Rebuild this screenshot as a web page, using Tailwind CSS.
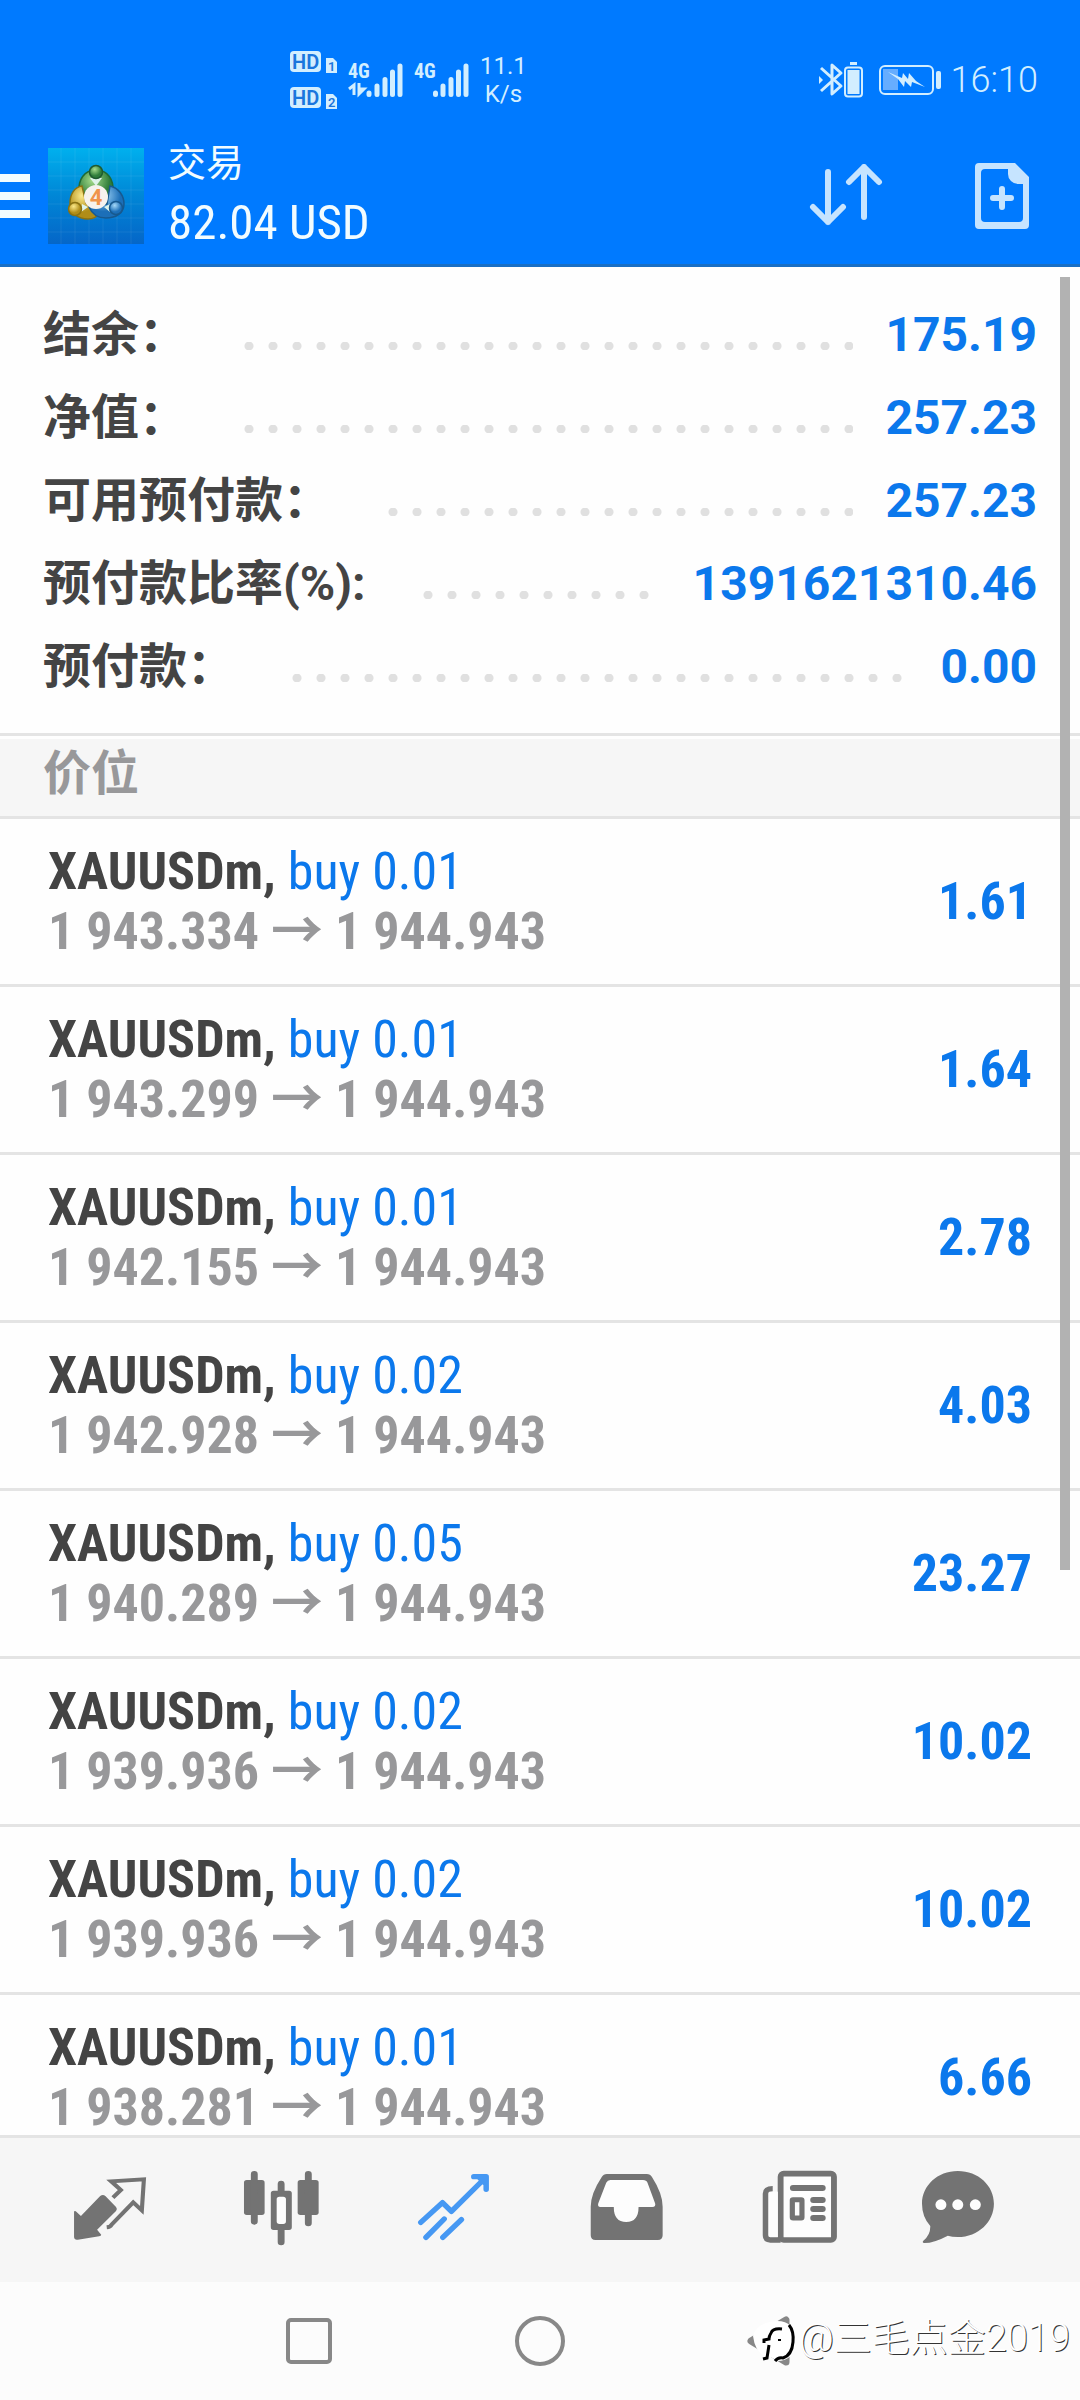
<!DOCTYPE html>
<html lang="zh-CN">
<head>
<meta charset="utf-8">
<meta name="viewport" content="width=device-width, initial-scale=1">
<title>交易</title>
<script src="https://cdn.jsdelivr.net/npm/@tailwindcss/browser@4"></script>
</head>
<body class="relative flex h-screen flex-col overflow-hidden bg-[#fefefe] font-['Roboto','Noto_Sans_CJK_SC',sans-serif] text-[#444]">

<header class="shrink-0 border-b-3 border-[#1a6fc4] bg-[#007aff] text-[#f2fcff]">
  <!-- system status -->
  <div class="flex h-32 items-center pt-8 pr-[42px] pl-[290px] text-[#d2eeff]">
    <svg class="h-[58px] w-12" viewBox="0 0 48 58" fill="currentColor">
      <rect x="0" y="0" width="31" height="21" rx="4"/><rect x="0" y="36" width="31" height="21" rx="4"/>
      <path d="M36 7h7l4 4v11H36zM36 43h7l4 4v11H36z"/>
      <g fill="#1b76dd" font-family="Roboto" font-weight="600"><text x="2" y="18" font-size="20">HD</text><text x="2" y="54" font-size="20">HD</text>
      <text x="38" y="20" font-size="13">1</text><text x="38" y="56" font-size="13">2</text></g>
    </svg>
    <svg class="ml-2.5 h-[38px] w-14 overflow-visible" viewBox="0 0 56 38" fill="currentColor">
      <text x="0" y="17" font-size="20" font-weight="700" font-family="Roboto Condensed">4G</text>
      <path d="M1 28l5-4v10M11 22v11l5-5h-5" stroke="currentColor" stroke-width="3" fill="none"/>
      <path d="M21 32v1.500M29 25v8.500M37 18.500v15M44.500 11v22.500M52 5v28.500" stroke="currentColor" stroke-width="5" stroke-linecap="round"/>
    </svg>
    <svg class="ml-2.5 h-[38px] w-14 overflow-visible" viewBox="0 0 56 38" fill="currentColor">
      <text x="0" y="17" font-size="20" font-weight="700" font-family="Roboto Condensed">4G</text>
      <path d="M21.500 32v1.500M29 25v8.500M37 18.500v15M44.500 11v22.500M52 5v28.500" stroke="currentColor" stroke-width="5" stroke-linecap="round"/>
    </svg>
    <p class="ml-2.5 text-center text-2xl leading-7">11.1<br>K/s</p>
    <svg class="ml-auto h-9 w-12" viewBox="0 0 48 36" fill="none" stroke="currentColor">
      <path d="M2 6l20 18-9 8V3l9 8L2 29" stroke-width="3" stroke-linejoin="round"/>
      <path d="M0 14l4 4-4 4z" fill="currentColor" stroke="none"/>
      <path d="M31 1.500h7" stroke-width="3"/><rect x="26" y="5.500" width="17" height="29" rx="3" stroke-width="2"/><rect x="28.500" y="8" width="12" height="24" fill="currentColor" stroke="none"/>
    </svg>
    <svg class="ml-3 h-[30px] w-[62px]" viewBox="0 0 62 30" fill="none" stroke="currentColor">
      <rect x="1" y="1" width="53" height="28" rx="5" stroke-width="2"/><rect x="4" y="4" width="15" height="21" fill="#66adff" stroke="none"/>
      <path d="M9 7l14 6 1-5 5 6 1-6 7 8 9 6-13-5-1 5-6-6-1 6-6-8z" fill="currentColor" stroke="none"/>
      <rect x="57" y="6" width="5" height="18" rx="2" fill="currentColor" stroke="none"/>
    </svg>
    <p class="ml-2.5 text-4xl font-light">16:10</p>
  </div>
  <!-- app bar -->
  <div class="flex h-[136px] items-center pr-[50px]">
    <button aria-label="菜单" class="flex w-[30px] flex-col gap-2.5">
      <span class="h-2 bg-current"></span><span class="h-2 bg-current"></span><span class="h-2 bg-current"></span>
    </button>
    <svg class="ml-[18px] size-24" viewBox="0 0 96 96">
      <defs>
        <linearGradient id="bg" x2="0" y2="1"><stop stop-color="#00b0ee"/><stop offset=".5" stop-color="#0086d6"/><stop offset="1" stop-color="#0566c8"/></linearGradient>
        <radialGradient id="gr" cx=".4" cy=".3"><stop stop-color="#a6dc8c"/><stop offset="1" stop-color="#2f7d3a"/></radialGradient>
        <radialGradient id="ye" cx=".4" cy=".3"><stop stop-color="#fbe98a"/><stop offset="1" stop-color="#b08d18"/></radialGradient>
        <radialGradient id="bl" cx=".4" cy=".3"><stop stop-color="#a5d8f8"/><stop offset="1" stop-color="#1c6fb8"/></radialGradient>
      </defs>
      <rect width="96" height="96" fill="url(#bg)"/>
      <path d="M0 14h96M0 28h96M0 42h96M0 56h96M0 70h96M0 84h96M13 0v96M27 0v96M41 0v96M55 0v96M69 0v96M83 0v96" stroke="#fff" stroke-opacity=".07"/>
      <g stroke-width="1.500">
        <path d="M48 22c12 0 18 10 17 22l-4 12-13-4-13 4-4-12c-1-12 5-22 17-22z" fill="url(#gr)" stroke="#1f6a35"/>
        <path d="M34 38c-8 1-12 9-12 17 0 10 8 16 18 16 6 0 9-2 11-6L38 55z" fill="url(#ye)" stroke="#8a7212"/>
        <path d="M62 38c9 2 14 10 14 18 0 9-8 14-18 14-8 0-14-4-17-11l18-3z" fill="url(#bl)" stroke="#17598f"/>
        <path d="M42 30h12l-6 8zM33 64l1-8 6 3zM62 64l0-8-6 3z" fill="#dff3ea"/>
        <circle cx="48" cy="24" r="6.500" fill="url(#gr)" stroke="#1f5a30"/>
        <circle cx="27" cy="61" r="6.500" fill="url(#ye)" stroke="#8a7212"/>
        <circle cx="68" cy="60" r="6.500" fill="url(#bl)" stroke="#17598f"/>
      </g>
      <circle cx="48" cy="49" r="12" fill="#f6f2ee"/>
      <text x="48" y="57" text-anchor="middle" font-family="Roboto" font-size="22" font-weight="700" fill="#f0944a">4</text>
    </svg>
    <div class="ml-6 flex flex-col">
      <h1 class="text-[38px] leading-[54px]">交易</h1>
      <p class="font-['Roboto_Condensed',sans-serif] text-[49px] leading-[66px]">82.04 USD</p>
    </div>
    <button aria-label="排序" class="ml-auto text-[#c6e4ff]">
      <svg class="h-16 w-[75px]" viewBox="0 0 75 64" fill="none" stroke="currentColor" stroke-width="6" stroke-linecap="round" stroke-linejoin="round"><path d="M20 8v50M5 43l15 15 15-15M56 53V3M41 18L56 3l15 15"/></svg>
    </button>
    <button aria-label="新订单" class="ml-[91px] text-[#c6e4ff]">
      <svg class="h-[68px] w-14" viewBox="0 0 56 68"><path fill="currentColor" fill-rule="evenodd" d="M5 1h36l14 14v48a4 4 0 0 1-4 4H5a4 4 0 0 1-4-4V5a4 4 0 0 1 4-4zm6 6a4 4 0 0 0-4 4v45a4 4 0 0 0 4 4h34a4 4 0 0 0 4-4V22h-5a10 10 0 0 1-10-10V7z"/><path d="M28 27v18M19 36h18" stroke="currentColor" stroke-width="6" stroke-linecap="round"/></svg>
    </button>
  </div>
</header>

<main class="min-h-0 flex-1 overflow-hidden">
  <dl id="summary" class="flex flex-col px-[43px] pt-[26px] pb-[25px] text-5xl font-bold"></dl>
  <div class="border-y-3 border-[#e4e4e4] pt-[3px]">
    <h2 class="bg-[#f6f6f6] pb-2 pl-[43px] text-5xl leading-[69px] font-bold text-[#98989a]">价位</h2>
  </div>
  <ul id="positions" class="font-['Roboto_Condensed',sans-serif] text-[52px] leading-[59px]"></ul>
</main>

<div class="absolute top-[277px] right-2.5 h-[1293px] w-2.5 bg-[#b2b2b2]"></div>

<nav class="grid h-[147px] shrink-0 grid-cols-6 border-t-3 border-[#e4e4e4] bg-[#f6f6f6] px-6 text-[#737373]">
  <a href="#quotes" aria-label="行情" class="flex items-center justify-center">
    <svg class="size-24" viewBox="180 126 279 288" preserveAspectRatio="none"><path fill="currentColor" d="M291 228q8-6 15 0l31 33q5 6 0 12l-55 56 12 15q0 4-6 5l-62 10q-10 2-11-8v-75q0-4 5-2l15 14z"/><path fill="none" stroke="currentColor" stroke-width="12" d="M328 233l23-23-28-26 95-6-6 93-25-24-63 67q-4 7-14 8"/></svg>
  </a>
  <a href="#charts" aria-label="图表" class="flex items-center justify-center">
    <svg class="size-24" viewBox="680 126 279 288" preserveAspectRatio="none" fill="currentColor"><rect x="709" y="180" width="60" height="105" rx="8"/><rect x="865" y="180" width="61" height="105" rx="8"/><path stroke="currentColor" stroke-width="20" stroke-linecap="round" d="M739 163v141M896 163v146M817 192v20M817 330v36"/><rect x="800" y="225" width="34" height="92" fill="#fdfdfd"/><path fill-rule="evenodd" d="M795 212h45q8 0 8 8v102q0 8-8 8h-45q-8 0-8-8V220q0-8 8-8zm17 18q-8 0-8 8v66q0 8 8 8h11q8 0 8-8v-66q0-8-8-8z"/></svg>
  </a>
  <a href="#trade" aria-label="交易" aria-current="page" class="flex items-center justify-center text-[#4698f3]">
    <svg class="size-24" viewBox="1179 126 279 288" preserveAspectRatio="none" fill="none" stroke="currentColor" stroke-width="16" stroke-linecap="round" stroke-linejoin="round"><path d="M1222 307l63-59 26 26 98-100M1376 170h36v38M1392 172l18 18M1237 352l53-55M1286 352l54-53"/></svg>
  </a>
  <a href="#history" aria-label="历史" class="flex items-center justify-center">
    <svg class="size-24" viewBox="110 126 279 288" preserveAspectRatio="none"><path fill="#fdfdfd" d="M185 172h133l22 92H160z"/><circle cx="250" cy="270" r="38" fill="#fdfdfd"/><path fill="currentColor" fill-rule="evenodd" d="M194 162h116q10 0 15 9 31 50 31 89v86q0 14-14 14H161q-14 0-14-14v-86q0-39 32-89 5-9 15-9zm10 18q-8 0-12 8l-23 62q-3 11 6 11h39q0 45 36 45t36-45h40q11 0 8-11l-22-62q-3-8-13-8z"/></svg>
  </a>
  <a href="#news" aria-label="新闻" class="flex items-center justify-center">
    <svg class="size-24" viewBox="610 126 279 288" preserveAspectRatio="none" fill="none" stroke="currentColor" stroke-width="17"><rect x="699" y="161" width="155" height="199" rx="9" fill="#fdfdfd"/><path fill="#fdfdfd" stroke="none" d="M663 215h28v136h-28z"/><path stroke-width="16" d="M676 206q-21 0-21 15v125q0 14 14 14h30"/><path stroke-width="18" stroke-linecap="round" d="M735 204h86M794 240h27M794 267h27M794 294h27"/><rect x="733" y="239" width="28" height="55" rx="2" stroke-width="15"/></svg>
  </a>
  <a href="#messages" aria-label="消息" class="flex items-center justify-center">
    <svg class="size-24" viewBox="1109 126 279 288" preserveAspectRatio="none"><path fill="currentColor" d="M1213 153c60 0 105 44 105 98s-45 100-105 100q-17 0-29-4-40 22-68 22-8-1-3-7 21-17 20-44-24-28-24-67c0-54 45-98 104-98z"/><g fill="#fdfdfd"><circle cx="1164" cy="254" r="16"/><circle cx="1213" cy="254" r="16"/><circle cx="1264" cy="254" r="16"/></g></svg>
  </a>
</nav>

<footer class="relative flex h-[118px] shrink-0 items-center justify-center gap-[179px] bg-[#fcfcfc] text-[#888]">
  <button aria-label="最近任务" class="size-[52px]"><svg viewBox="0 0 52 52" fill="none" stroke="currentColor" stroke-width="4"><rect x="5" y="5" width="42" height="42" rx="3"/></svg></button>
  <button aria-label="主屏幕" class="size-[52px]"><svg viewBox="0 0 52 52" fill="none" stroke="currentColor" stroke-width="4"><circle cx="26" cy="26" r="23"/></svg></button>
  <button aria-label="返回" class="size-[52px]"><svg viewBox="0 0 52 52" fill="none" stroke="currentColor" stroke-width="7" stroke-linejoin="round"><path d="M6 26L41 5v42z"/></svg></button>
  <div class="absolute right-2.5 bottom-[34px] flex items-center">
    <svg class="h-14 w-[52px]" viewBox="0 0 52 56"><path fill="#fff" d="M6 26Q10 12 30 11q18 0 18 20 0 20-18 20-4-4-12-5-10-4-12-20z"/><path d="M42 15q5 6 4 17-1 13-10 16-5-1-8 3" fill="none" stroke="#000" stroke-width="3"/><path d="M35 19q-9-1-11 4-2 3-2 6l-5 1v3m5 2l-2 13-4 1" fill="none" stroke="#000" stroke-width="3"/><path d="M31 30h3" stroke="#000" stroke-width="2"/></svg>
    <p class="text-[38px] leading-[56px] font-light text-white [text-shadow:1px_1px_0_#333]">@三毛点金2019</p>
  </div>
</footer>

<script>
const summary = [['结余：','175.19'],['净值：','257.23'],['可用预付款：','257.23'],['预付款比率(%):','1391621310.46'],['预付款：','0.00']];
document.getElementById('summary').innerHTML = summary.map(([k, v]) => `
  <div class="flex h-[83px] items-center">
    <dt class="mr-[50px]">${k}</dt>
    <dd class="flex flex-1 items-center text-[#0b78ec]"><span class="mt-[22px] h-2 flex-1 bg-[radial-gradient(circle,#e0e0e0_4px,transparent_5px)] bg-[length:24px_8px]"></span><span class="ml-8">${v}</span></dd>
  </div>`).join('');
const positions = [['0.01','1 943.334','1.61'],['0.01','1 943.299','1.64'],['0.01','1 942.155','2.78'],['0.02','1 942.928','4.03'],['0.05','1 940.289','23.27'],['0.02','1 939.936','10.02'],['0.02','1 939.936','10.02'],['0.01','1 938.281','6.66']];
document.getElementById('positions').innerHTML = positions.map(([lot, open, profit]) => `
  <li class="flex h-42 items-center justify-between border-b-3 border-[#e4e4e4] px-12 font-bold">
    <div>
      <p>XAUUSDm, <span class="font-normal text-[#0b78ec]">buy ${lot}</span></p>
      <p class="text-[#98989a]">${open} <span class="font-['Noto_Sans_CJK_SC',sans-serif] leading-none">→</span> 1 944.943</p>
    </div>
    <p class="text-[#0b78ec]">${profit}</p>
  </li>`).join('');
</script>
</body>
</html>
